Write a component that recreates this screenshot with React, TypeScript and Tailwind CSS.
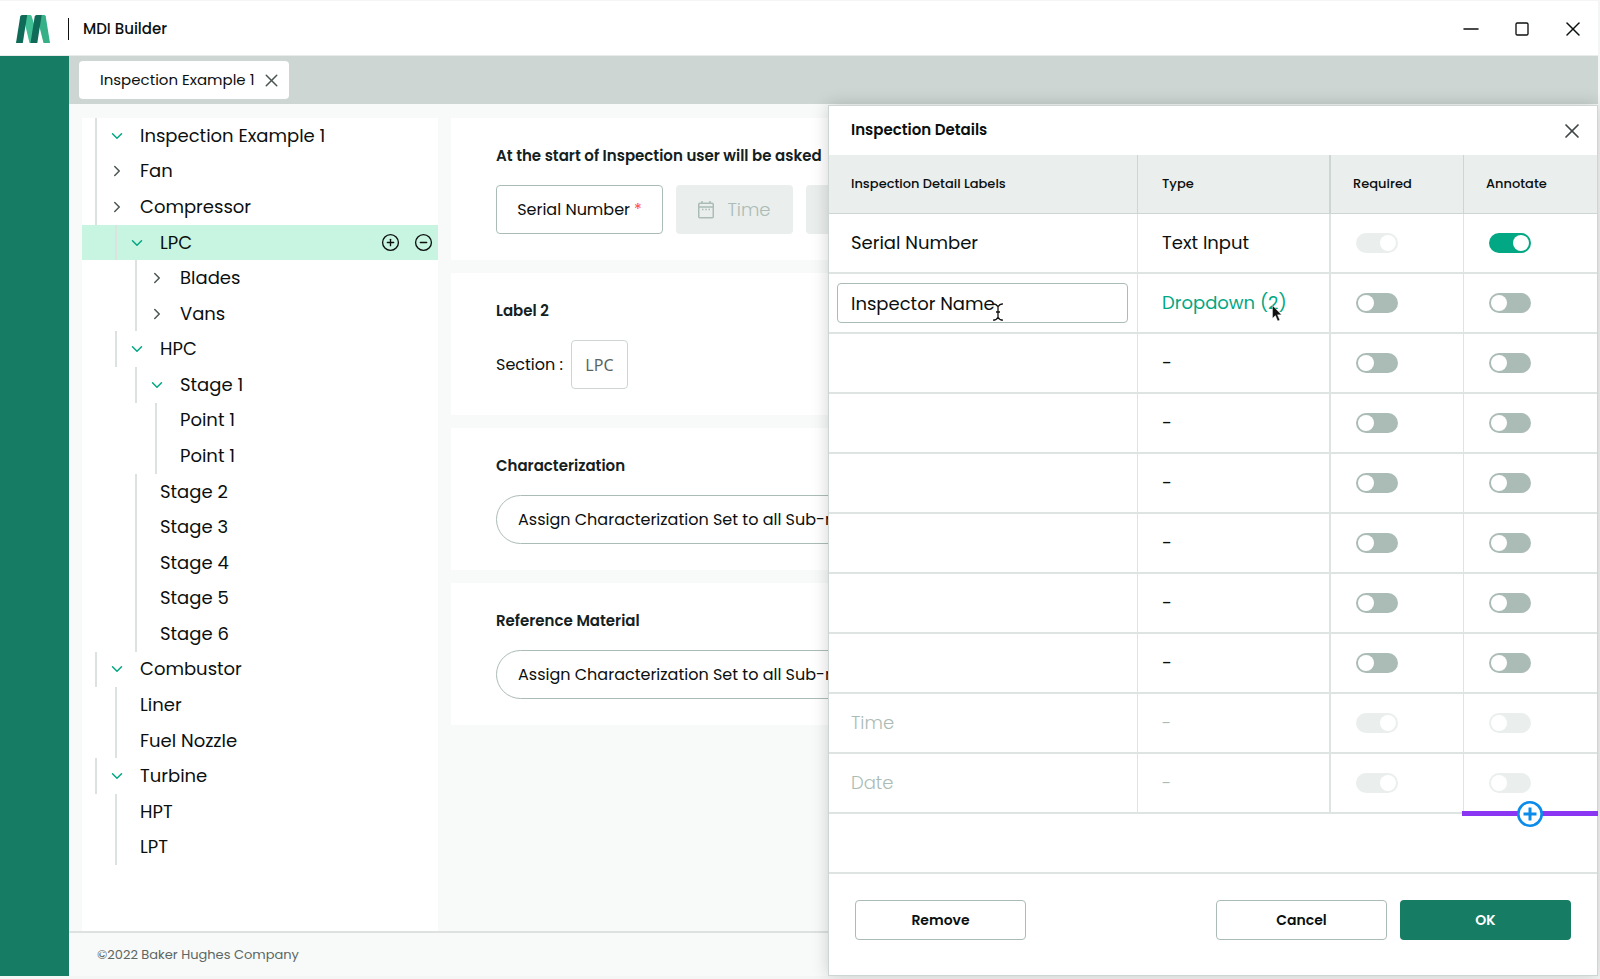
import { ChevronDown, ChevronRight, CircleMinus, CirclePlus, Minus, Square, X } from "lucide-react";

interface TreeNode {
  label: string;
  level: number;
  state?: "open" | "closed";
  selected?: boolean;
}

interface DetailRow {
  label: string;
  type: string;
  required: boolean;
  annotate: boolean;
  requiredDisabled?: boolean;
  disabled?: boolean;
  editing?: boolean;
}

const TREE: TreeNode[] = [
  { label: "Inspection Example 1", level: 0, state: "open" },
  { label: "Fan", level: 0, state: "closed" },
  { label: "Compressor", level: 0, state: "closed" },
  { label: "LPC", level: 1, state: "open", selected: true },
  { label: "Blades", level: 2, state: "closed" },
  { label: "Vans", level: 2, state: "closed" },
  { label: "HPC", level: 1, state: "open" },
  { label: "Stage 1", level: 2, state: "open" },
  { label: "Point 1", level: 3 },
  { label: "Point 1", level: 3 },
  { label: "Stage 2", level: 2 },
  { label: "Stage 3", level: 2 },
  { label: "Stage 4", level: 2 },
  { label: "Stage 5", level: 2 },
  { label: "Stage 6", level: 2 },
  { label: "Combustor", level: 0, state: "open" },
  { label: "Liner", level: 1 },
  { label: "Fuel Nozzle", level: 1 },
  { label: "Turbine", level: 0, state: "open" },
  { label: "HPT", level: 1 },
  { label: "LPT", level: 1 },
];

const INDENT = ["pl-[13px]", "pl-[33px]", "pl-[53px]", "pl-[73px]"];

const EMPTY_ROW: DetailRow = { label: "", type: "-", required: false, annotate: false };

const ROWS: DetailRow[] = [
  { label: "Serial Number", type: "Text Input", required: true, annotate: true, requiredDisabled: true },
  { label: "Inspector Name", type: "Dropdown (2)", required: false, annotate: false, editing: true },
  EMPTY_ROW,
  EMPTY_ROW,
  EMPTY_ROW,
  EMPTY_ROW,
  EMPTY_ROW,
  EMPTY_ROW,
  { label: "Time", type: "-", required: true, annotate: false, disabled: true },
  { label: "Date", type: "-", required: true, annotate: false, disabled: true },
];

const Logo = () => (
  <svg width="34" height="28" viewBox="0 0 34 28" aria-hidden="true">
    <path d="M9 0h5q1.400 0 1.700 1.200L18 9l1 19h-5.500L8.500 7z" fill="#3fbf93" />
    <path d="M23 0h5q1.400 0 1.700 1.300L34 28h-6.500L22.500 8z" fill="#37b088" />
    <path d="M6 0h5.200L6.800 28H0L4.200 1.600Q4.500 0 6 0z" fill="#0f6b57" />
    <path d="M20.500 0h5.200l-4.400 28h-6.800L18.700 1.600Q19 0 20.500 0z" fill="#0f6b57" />
  </svg>
);

const CalendarIcon = () => (
  <svg width="16" height="18" viewBox="0 0 16 18" fill="none" stroke="currentColor" strokeWidth="1.5" aria-hidden="true">
    <rect x="0.750" y="2.250" width="14.500" height="14.500" rx="1" />
    <path d="M1 6h14M4 0v3M12 0v3" />
    <path d="M4 8.500h1.500M7.250 8.500h1.500M10.500 8.500H12" />
  </svg>
);

const Toggle = ({ label, checked, disabled }: { label: string; checked: boolean; disabled?: boolean }) => (
  <input
    type="checkbox"
    role="switch"
    aria-label={label}
    defaultChecked={checked}
    disabled={disabled}
    className="block h-5 w-[42px] appearance-none rounded-full bg-[#abbcb6] p-[2px] before:block before:size-4 before:rounded-full before:bg-white checked:bg-[#02a783] checked:before:ml-[22px] disabled:bg-[#eaeeed]"
  />
);

const Tree = () => (
  <ul className="flex w-[356px] shrink-0 flex-col bg-white pb-[66px]">
    {TREE.map(({ label, level, state, selected }, i) => (
      <li key={i} className={`flex min-h-0 flex-1 ${INDENT[level]} ${selected ? "bg-[#c7f5e1]" : ""}`}>
        <div className="flex flex-1 items-center border-l-2 border-[#dbe2e0] pr-[5px]">
          {state ? (
            <button type="button" aria-label={`Toggle ${label}`} className="flex w-[43px] justify-start pl-[11px]">
              {state === "open" ? (
                <ChevronDown className="size-[18px] text-[#02a783]" />
              ) : (
                <ChevronRight className="size-[18px] text-[#4b5553]" />
              )}
            </button>
          ) : (
            <span className="w-[23px]" />
          )}
          <span className="text-lg">{label}</span>
          {selected && (
            <div className="ml-auto flex gap-[14px]">
              <button type="button" aria-label="Add node">
                <CirclePlus className="size-[19px]" strokeWidth={1.7} />
              </button>
              <button type="button" aria-label="Remove node">
                <CircleMinus className="size-[19px]" strokeWidth={1.7} />
              </button>
            </div>
          )}
        </div>
      </li>
    ))}
  </ul>
);

const Card = ({ title, children }: { title: string; children: React.ReactNode }) => (
  <section className="bg-white px-[45px] py-[26px]">
    <h2 className="mb-[17px] text-[15px] leading-6 font-semibold whitespace-nowrap text-[#14211e]">{title}</h2>
    <div className="flex h-[49px] items-stretch">{children}</div>
  </section>
);

const Workspace = () => (
  <main className="flex min-w-0 flex-1 flex-col gap-[13px] overflow-hidden">
    <Card title="At the start of Inspection user will be asked">
      <div className="flex w-[167px] shrink-0 items-center justify-center rounded border border-[#abbcb6]">
        Serial Number <span className="ml-1 text-[#ff4a3d]">*</span>
      </div>
      <div className="ml-[13px] flex w-[117px] shrink-0 items-center justify-center gap-[13px] rounded bg-[#eaeeed] text-lg font-light text-[#abbcb6]">
        <CalendarIcon />
        Time
      </div>
      <div className="ml-[13px] flex w-[117px] shrink-0 items-center justify-center gap-[13px] rounded bg-[#eaeeed] text-lg font-light text-[#abbcb6]">
        <CalendarIcon />
        Date
      </div>
    </Card>
    <Card title="Label 2">
      <span className="flex items-center">Section :</span>
      <div className="ml-2 flex w-[57px] items-center justify-center rounded border border-[#cdd6d3] font-['Noto_Sans',sans-serif] text-[#5c6664]">
        LPC
      </div>
    </Card>
    <Card title="Characterization">
      <button type="button" className="rounded-full border border-[#abbcb6] px-[21px] whitespace-nowrap">
        Assign Characterization Set to all Sub-nodes
      </button>
    </Card>
    <Card title="Reference Material">
      <button type="button" className="rounded-full border border-[#abbcb6] px-[21px] whitespace-nowrap">
        Assign Characterization Set to all Sub-nodes
      </button>
    </Card>
  </main>
);

const DetailsTable = () => (
  <table className="w-full table-fixed border-separate border-spacing-0 text-left">
    <thead className="text-[13px]">
      <tr className="h-[59px] bg-[#eaeeed] [&>th]:border-b [&>th]:border-[#cdd6d3] [&>th]:pl-[22px] [&>th]:font-medium">
        <th className="w-[309px] border-r">Inspection Detail Labels</th>
        <th className="w-[193px] border-r-2">
          <span className="pl-[2px]">Type</span>
        </th>
        <th className="w-[133px] border-r">Required</th>
        <th>Annotate</th>
      </tr>
    </thead>
    <tbody className="text-lg">
      {ROWS.map((row, i) => (
        <tr
          key={i}
          className={`h-15 [&>td]:border-b-2 [&>td]:border-[#dde4e2] ${row.disabled ? "font-light text-[#abbcb6]" : ""}`}
        >
          <td className="border-r pl-[22px]">
            {row.editing ? (
              <div className="relative mr-[9px] -ml-[14px]">
                <input
                  aria-label="Inspection detail label"
                  defaultValue={row.label}
                  className="block h-10 w-full rounded border border-[#abbcb6] px-[13px] outline-none"
                />
                <svg className="absolute top-5 left-[155px]" width="12" height="18" viewBox="0 0 12 18" aria-hidden="true">
                  <path
                    d="M1 .8q3.500 0 5 3q1.500-3 5-3M6 3.800v10.400M1 17.200q3.500 0 5-3q1.500 3 5 3M4 9h4"
                    fill="none"
                    stroke="#111"
                    strokeWidth="1.300"
                  />
                </svg>
              </div>
            ) : (
              row.label
            )}
          </td>
          <td className="border-r-2 pl-6">
            {row.editing ? (
              <div className="relative">
                <button type="button" className="text-[#02a783]">
                  {row.type}
                </button>
                <svg className="absolute top-4 left-[110px]" width="10" height="17" viewBox="0 0 10 17" aria-hidden="true">
                  <path d="M.5.500v12.800l2.900-2.700 2.300 5.400 2.100-.9-2.300-5.300h4z" fill="#111" stroke="#fff" strokeWidth=".4" />
                </svg>
              </div>
            ) : (
              row.type
            )}
          </td>
          <td className="border-r pl-[25px]">
            <Toggle label="Required" checked={row.required} disabled={row.disabled || row.requiredDisabled} />
          </td>
          <td className="pl-[25px]">
            <Toggle label="Annotate" checked={row.annotate} disabled={row.disabled} />
          </td>
        </tr>
      ))}
    </tbody>
  </table>
);

const DetailsDialog = () => (
  <div
    role="dialog"
    aria-labelledby="details-title"
    className="absolute top-[49px] right-0 bottom-0 flex w-[770px] flex-col border border-[#cdd6d3] bg-white shadow-[0_0_16px_rgba(0,0,0,0.18)]"
  >
    <div className="flex h-[49px] shrink-0 items-center justify-between pr-[13px] pl-[22px]">
      <h2 id="details-title" className="text-[15px] font-semibold">
        Inspection Details
      </h2>
      <button type="button" aria-label="Close details">
        <X className="size-6 text-[#3f4846]" strokeWidth={1.7} />
      </button>
    </div>
    <div className="relative">
      <DetailsTable />
      <div className="absolute -right-px -bottom-[2px] flex h-[5px] w-[136px] items-center justify-center bg-[#8a35f2]">
        <svg width="26" height="26" viewBox="0 0 26 26" className="shrink-0" aria-hidden="true">
          <circle cx="13" cy="13" r="11.700" fill="#fff" stroke="#0b8bea" strokeWidth="2.600" />
          <path d="M13 6.500v13M6.500 13h13" stroke="#0b8bea" strokeWidth="3" />
        </svg>
      </div>
    </div>
    <div className="mt-auto flex h-[103px] shrink-0 items-start gap-[13px] border-t-2 border-[#dde4e2] px-[26px] pt-[26px] text-sm font-semibold">
      <button type="button" className="mr-auto h-10 w-[171px] rounded border border-[#abbcb6]">
        Remove
      </button>
      <button type="button" className="h-10 w-[171px] rounded border border-[#abbcb6]">
        Cancel
      </button>
      <button type="button" className="h-10 w-[171px] rounded bg-[#177c64] text-white">
        OK
      </button>
    </div>
  </div>
);

const App = () => {
  return (
    <div className="flex h-screen flex-col bg-[#f4f5f5] pt-px pr-[2px] pb-[3px] font-[Poppins,Inter,sans-serif] text-base text-[#0b0f0e]">
      <header className="flex h-[55px] shrink-0 items-center border-b border-[#e8ecec] bg-white pt-px pr-[13px] pl-4">
        <Logo />
        <span className="mr-[14px] ml-[18px] h-[22px] w-px bg-[#111]" />
        <h1 className="text-[15px] leading-6 font-medium">MDI Builder</h1>
        <div className="ml-auto flex items-center gap-[31px]">
          <button type="button" aria-label="Minimize">
            <Minus className="size-6" strokeWidth={1.5} />
          </button>
          <button type="button" aria-label="Maximize">
            <Square className="size-4" strokeWidth={2} />
          </button>
          <button type="button" aria-label="Close window">
            <X className="size-6" strokeWidth={1.5} />
          </button>
        </div>
      </header>
      <div className="flex min-h-0 flex-1">
        <aside className="w-[69px] shrink-0 bg-[#177c64]" />
        <div className="relative flex min-w-0 flex-1 flex-col bg-[#f7faf9]">
          <nav className="flex h-12 shrink-0 items-center bg-[#cdd6d3] px-[10px]">
            <div className="flex h-[38px] w-[210px] items-center justify-between rounded bg-white pr-[7px] pl-[21px]">
              <span className="text-[15px]">Inspection Example 1</span>
              <button type="button" aria-label="Close tab">
                <X className="size-[21px] text-[#4b5553]" strokeWidth={1.7} />
              </button>
            </div>
          </nav>
          <div className="flex min-h-0 flex-1 gap-[13px] pt-[14px] pl-[13px]">
            <Tree />
            <Workspace />
          </div>
          <footer className="h-[45px] shrink-0 border-t-2 border-[#dde1e0] pt-3 pl-7 text-[13px] text-[#5c6664]">
            ©2022 Baker Hughes Company
          </footer>
          <DetailsDialog />
        </div>
      </div>
    </div>
  );
};

export default App;
